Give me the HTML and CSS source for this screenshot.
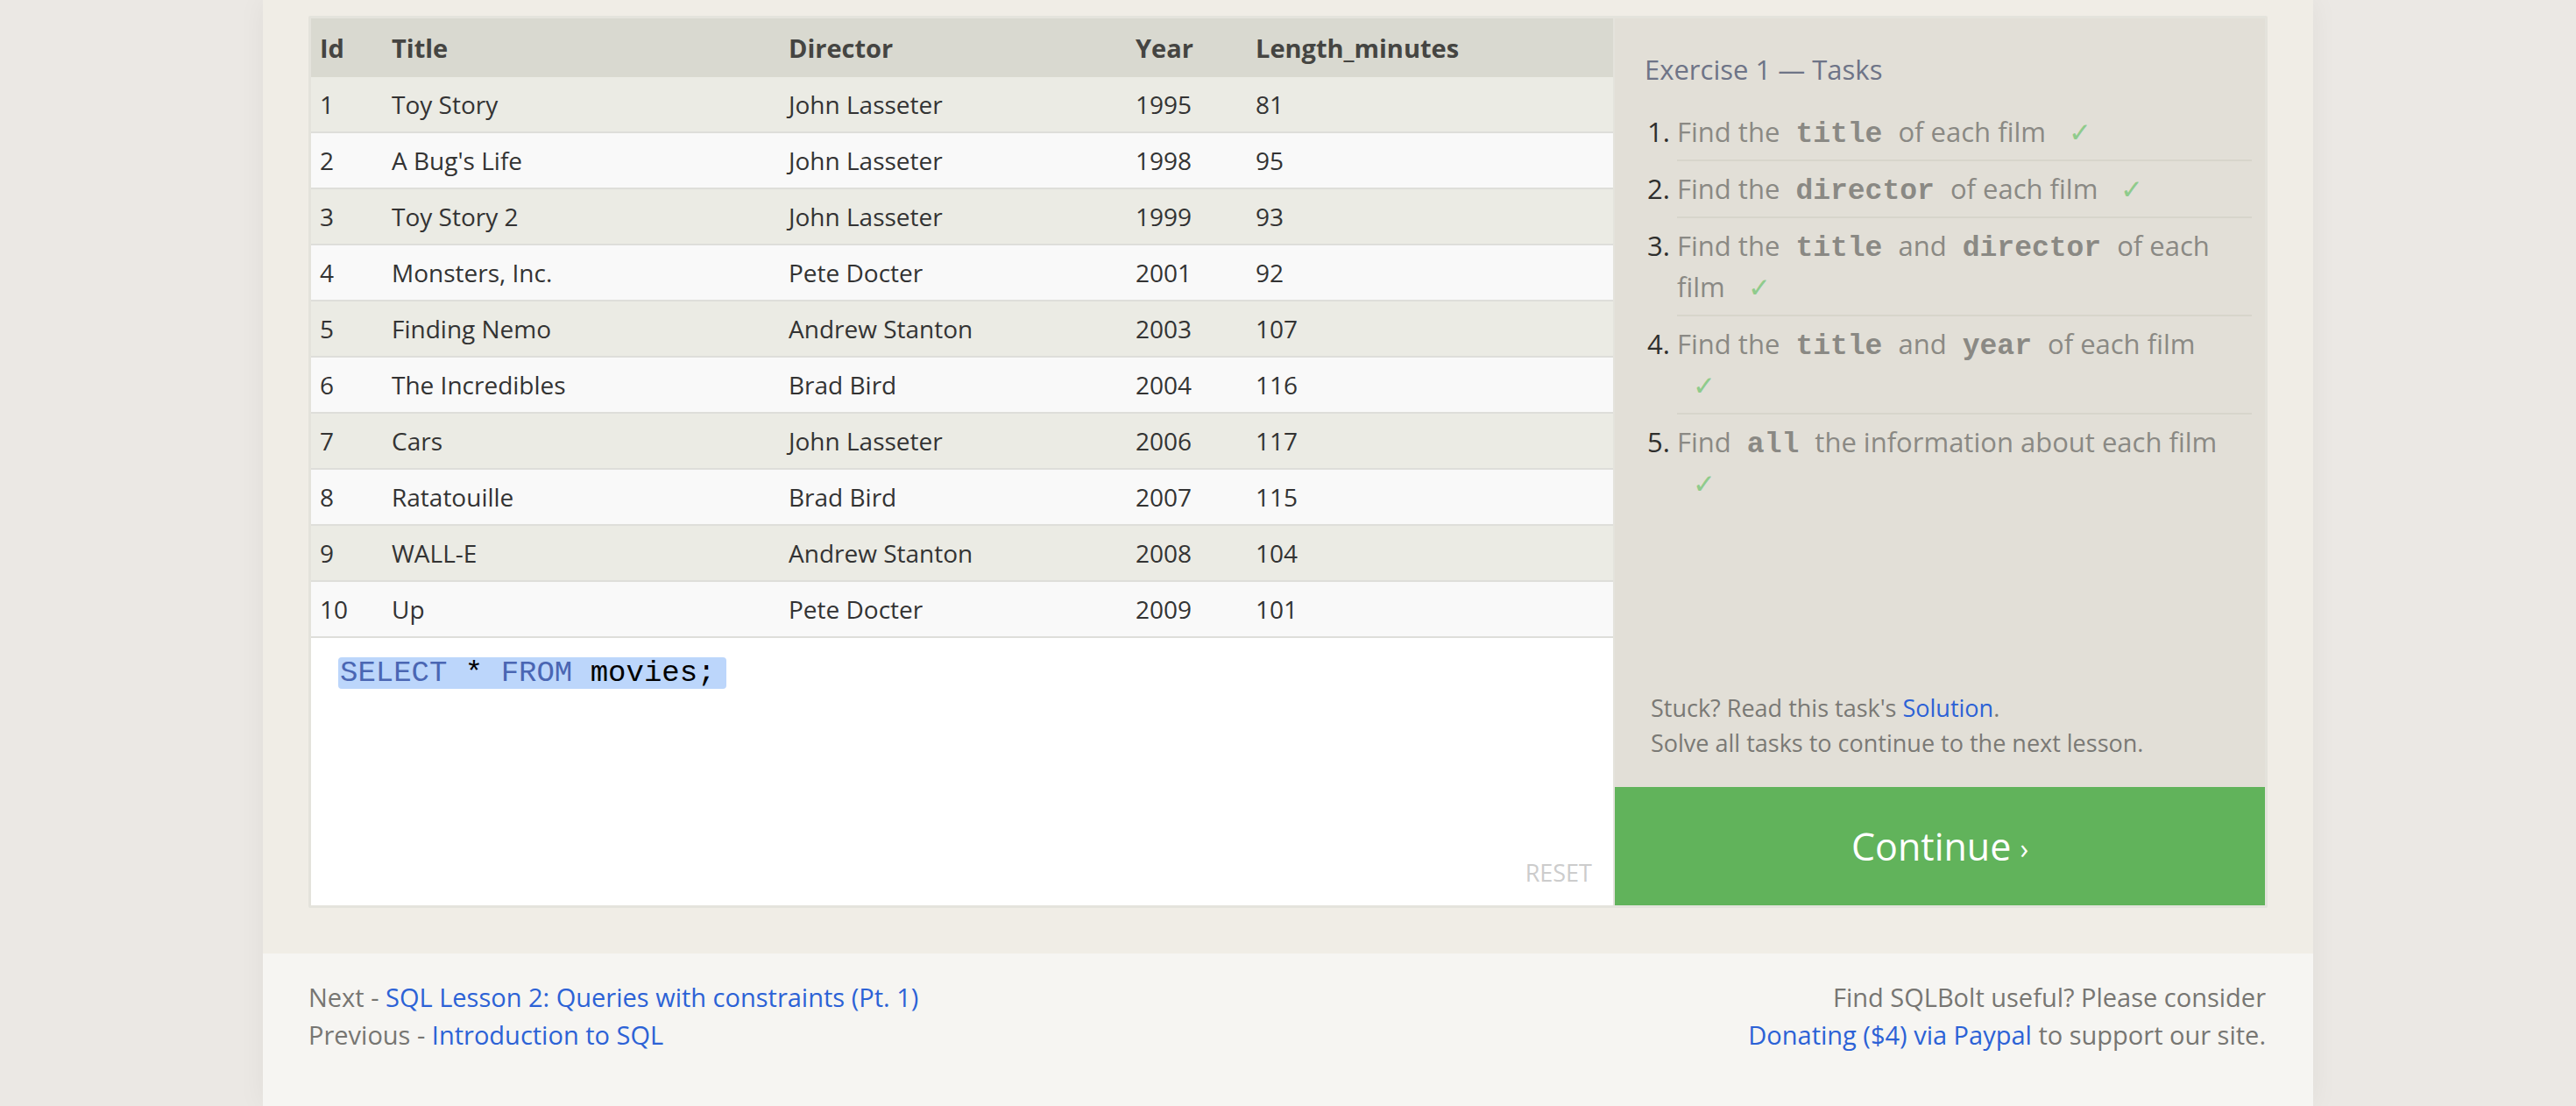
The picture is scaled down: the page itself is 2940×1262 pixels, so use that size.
FILE: index.html
```html
<!DOCTYPE html>
<html>
<head>
<meta charset="utf-8">
<title>SQLBolt - Lesson 1</title>
<link rel="stylesheet" href="styles.css">
</head>
<body>
<div class="page">
  <section class="main">
    <div class="widget">
      <div class="left">
        <table class="results">
          <colgroup>
            <col class="c-id"><col class="c-title"><col class="c-dir"><col class="c-year"><col class="c-len">
          </colgroup>
          <thead>
            <tr><th>Id</th><th>Title</th><th>Director</th><th>Year</th><th>Length_minutes</th></tr>
          </thead>
          <tbody>
            <tr><td>1</td><td>Toy Story</td><td>John Lasseter</td><td>1995</td><td>81</td></tr>
            <tr><td>2</td><td>A Bug's Life</td><td>John Lasseter</td><td>1998</td><td>95</td></tr>
            <tr><td>3</td><td>Toy Story 2</td><td>John Lasseter</td><td>1999</td><td>93</td></tr>
            <tr><td>4</td><td>Monsters, Inc.</td><td>Pete Docter</td><td>2001</td><td>92</td></tr>
            <tr><td>5</td><td>Finding Nemo</td><td>Andrew Stanton</td><td>2003</td><td>107</td></tr>
            <tr><td>6</td><td>The Incredibles</td><td>Brad Bird</td><td>2004</td><td>116</td></tr>
            <tr><td>7</td><td>Cars</td><td>John Lasseter</td><td>2006</td><td>117</td></tr>
            <tr><td>8</td><td>Ratatouille</td><td>Brad Bird</td><td>2007</td><td>115</td></tr>
            <tr><td>9</td><td>WALL-E</td><td>Andrew Stanton</td><td>2008</td><td>104</td></tr>
            <tr><td>10</td><td>Up</td><td>Pete Docter</td><td>2009</td><td>101</td></tr>
          </tbody>
        </table>
        <div class="editor">
          <div class="code"><span class="sel"><span class="kw">SELECT</span> * <span class="kw">FROM</span> movies;</span></div>
          <div class="reset">RESET</div>
        </div>
      </div>
      <div class="right">
        <div class="tasks">
          <h2 class="tasks-title">Exercise 1 — Tasks</h2>
          <ol class="task-list">
            <li>Find the <code>title</code> of each film <span class="check">✓</span></li>
            <li>Find the <code>director</code> of each film <span class="check">✓</span></li>
            <li>Find the <code>title</code> and <code>director</code> of each film <span class="check">✓</span></li>
            <li>Find the <code>title</code> and <code>year</code> of each film <span class="check">✓</span></li>
            <li>Find <code>all</code> the information about each film <span class="check">✓</span></li>
          </ol>
          <div class="help">
            <div>Stuck? Read this task's <a href="#">Solution</a>.</div>
            <div>Solve all tasks to continue to the next lesson.</div>
          </div>
        </div>
        <div class="continue">Continue <span class="arrow">›</span></div>
      </div>
    </div>
  </section>
  <footer class="footer">
    <div class="nav">
      <div>Next - <a href="#">SQL Lesson 2: Queries with constraints (Pt. 1)</a></div>
      <div>Previous - <a href="#">Introduction to SQL</a></div>
    </div>
    <div class="donate">
      <div>Find SQLBolt useful? Please consider</div>
      <div><a href="#">Donating ($4) via Paypal</a> to support our site.</div>
    </div>
  </footer>
</div>
</body>
</html>
```

FILE: styles.css
```css
html, body {
  margin: 0;
  padding: 0;
}
body {
  background: #ebe8e4;
  font-family: "Open Sans", Lato, sans-serif;
  min-height: 1262px;
}
.page {
  width: 2340px;
  margin: 0 auto;
  background: #f6f5f2;
  min-height: 1262px;
  box-shadow: 0 0 30px rgba(0, 0, 0, 0.05);
}
.main {
  background: #f0ede6;
  padding: 18px 52px 52px 52px;
}
.widget {
  display: flex;
  width: 2230px;
  border: 3px solid #e4e3dc;
  border-radius: 2px;
}
.left {
  width: 1486px;
  display: flex;
  flex-direction: column;
  border-right: 2px solid #e4e3dc;
}
.results {
  width: 100%;
  border-collapse: collapse;
  table-layout: fixed;
  font-size: 28px;
  color: #333;
}
.c-id { width: 82px; }
.c-title { width: 453px; }
.c-dir { width: 396px; }
.c-year { width: 137px; }
.results th {
  background: #d9d9d0;
  height: 67px;
  text-align: left;
  font-size: 29px;
  font-weight: bold;
  color: #454542;
  padding: 0 0 0 10px;
}
.results td {
  height: 62px;
  padding: 0 0 0 10px;
  border-bottom: 2px solid #dededa;
}
.results tbody tr:nth-child(odd) td { background: #ebebe4; }
.results tbody tr:nth-child(even) td { background: #f9f9f9; }
.editor {
  background: #fff;
  display: flex;
  flex-direction: column;
  padding: 22px 24px 20px 31px;
  height: 305px;
  box-sizing: border-box;
}
.code {
  font-family: "Liberation Mono", "Courier New", monospace;
  font-size: 34px;
  line-height: 36px;
  color: #000;
}
.sel {
  background: #bcd6fb;
  border-radius: 4px;
  padding: 0 12px 0 2px;
  display: inline-block;
}
.kw { color: #4a66b3; }
.reset {
  margin-top: auto;
  text-align: right;
  font-size: 27px;
  line-height: 34px;
  color: #cccccc;
}
.right {
  width: 742px;
  display: flex;
  flex-direction: column;
  background: #e2dfd7;
}
.tasks {
  flex: 1;
  display: flex;
  flex-direction: column;
  padding: 38px 15px 30px 34px;
}
.tasks-title {
  margin: 0 0 20px 0;
  font-size: 31px;
  line-height: 40px;
  font-weight: normal;
  color: #6e7487;
}
.task-list {
  margin: 0;
  padding: 0 0 0 37px;
  font-size: 31px;
  line-height: 47px;
  color: #8a8984;
}
.task-list li {
  padding: 8px 30px 8px 0;
  border-bottom: 2px solid #d7d5cb;
}
.task-list li:last-child { border-bottom: none; }
.task-list li::marker {
  color: #2e2e2c;
}
.task-list code {
  font-family: "Liberation Mono", "Courier New", monospace;
  font-weight: bold;
  font-size: 33px;
  line-height: 1;
  color: #8a8984;
  margin: 0 10px;
}
.check {
  color: #8fcb8c;
  margin-left: 18px;
  line-height: 1;
}
.help {
  margin-top: auto;
  padding-left: 7px;
  font-size: 27px;
  line-height: 40px;
  color: #7a7975;
}
a {
  color: #2c62d6;
  text-decoration: none;
}
.continue {
  height: 135px;
  background: #61b35b;
  color: #fff;
  font-size: 43px;
  display: flex;
  align-items: center;
  justify-content: center;
}
.arrow {
  font-size: 32px;
  margin-left: 10px;
  position: relative;
  top: 2px;
}
.footer {
  display: flex;
  justify-content: space-between;
  padding: 28px 54px 40px 52px;
  font-size: 29px;
  line-height: 43px;
  color: #777672;
}
.donate { text-align: right; }
```
